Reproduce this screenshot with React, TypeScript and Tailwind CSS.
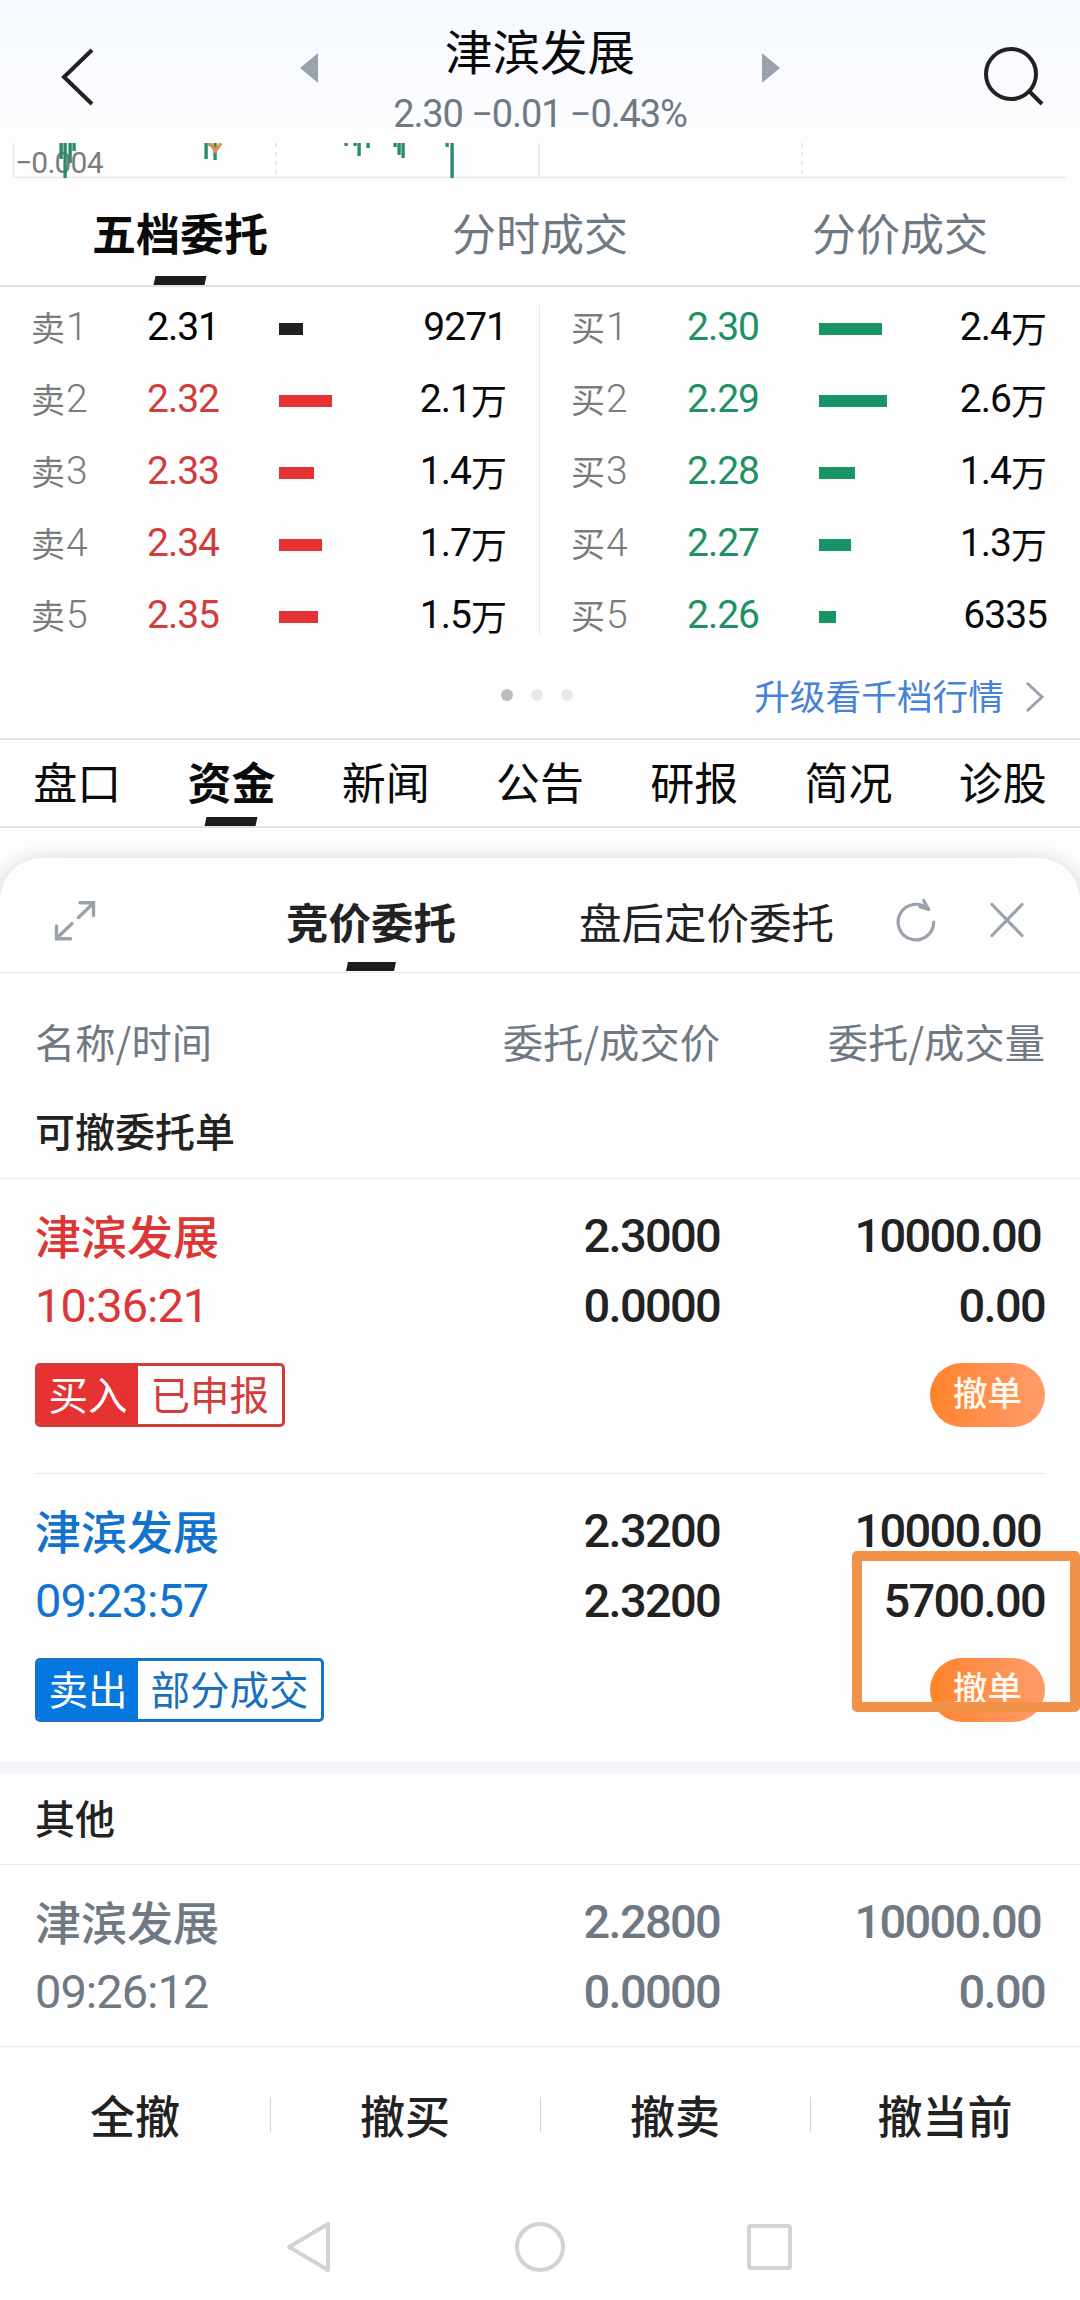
import { useState } from 'react';
import clsx from 'clsx';

type Level = {
  label: string;
  index: number;
  price: string;
  amount: string;
  unit?: string;
  bar: number;
  tone: 'flat' | 'up' | 'down';
};

type Order = {
  id: number;
  name: string;
  time: string;
  price: string;
  dealPrice: string;
  amount: string;
  dealAmount: string;
  side?: 'buy' | 'sell';
  status?: string;
};

const asks: Level[] = [
  { label: '卖', index: 1, price: '2.31', amount: '9271', bar: 24, tone: 'flat' },
  { label: '卖', index: 2, price: '2.32', amount: '2.1', unit: '万', bar: 53, tone: 'up' },
  { label: '卖', index: 3, price: '2.33', amount: '1.4', unit: '万', bar: 35, tone: 'up' },
  { label: '卖', index: 4, price: '2.34', amount: '1.7', unit: '万', bar: 43, tone: 'up' },
  { label: '卖', index: 5, price: '2.35', amount: '1.5', unit: '万', bar: 39, tone: 'up' },
];

const bids: Level[] = [
  { label: '买', index: 1, price: '2.30', amount: '2.4', unit: '万', bar: 63, tone: 'down' },
  { label: '买', index: 2, price: '2.29', amount: '2.6', unit: '万', bar: 68, tone: 'down' },
  { label: '买', index: 3, price: '2.28', amount: '1.4', unit: '万', bar: 36, tone: 'down' },
  { label: '买', index: 4, price: '2.27', amount: '1.3', unit: '万', bar: 32, tone: 'down' },
  { label: '买', index: 5, price: '2.26', amount: '6335', bar: 17, tone: 'down' },
];

const openOrders: Order[] = [
  {
    id: 1,
    name: '津滨发展',
    time: '10:36:21',
    price: '2.3000',
    dealPrice: '0.0000',
    amount: '10000.00',
    dealAmount: '0.00',
    side: 'buy',
    status: '已申报',
  },
  {
    id: 2,
    name: '津滨发展',
    time: '09:23:57',
    price: '2.3200',
    dealPrice: '2.3200',
    amount: '10000.00',
    dealAmount: '5700.00',
    side: 'sell',
    status: '部分成交',
  },
];

const closedOrder: Order = {
  id: 3,
  name: '津滨发展',
  time: '09:26:12',
  price: '2.2800',
  dealPrice: '0.0000',
  amount: '10000.00',
  dealAmount: '0.00',
};

// [x, height] of the volume bars left visible under the header
const volumeBars = [
  [61, 16], [65, 35], [70, 20], [74, 8],
  [206, 16], [210, 3], [215, 17],
  [346, 3], [355, 3], [359, 13], [368, 5],
  [395, 4], [399, 12], [403, 15],
  [447, 4], [452, 35],
];

const textTone = { flat: 'text-black', up: 'text-[#d23c3c]', down: 'text-[#219065]' };
const barTone = { flat: 'bg-[#222]', up: 'bg-[#e63232]', down: 'bg-[#199466]' };

function Indicator({ className }: { className?: string }) {
  return <span className={clsx('absolute left-1/2 h-[9px] -translate-x-1/2 -skew-x-12 bg-[#1c1c1c]', className)} />;
}

function Header() {
  return (
    <header className="flex h-[143px] items-start justify-between bg-gradient-to-b from-[#f5f9ff] to-[#fdfdfe]">
      <svg className="mt-[45px] ml-[56px] h-[64px] w-[44px]" viewBox="0 0 44 64" fill="none" stroke="#222" strokeWidth="4">
        <path d="M36 5 L8 32 L36 59" />
      </svg>
      <div className="flex w-[480px] items-start justify-between">
        <svg className="mt-[53px] h-[30px] w-[18px]" viewBox="0 0 18 30" fill="#9aa3ad">
          <path d="M0 15 L18 0 V30 Z" />
        </svg>
        <div className="flex flex-col items-center">
          <h1 className="mt-[20px] h-[60px] text-[47.5px] leading-[60px]">津滨发展</h1>
          <p className="mt-[13px] font-[Roboto] text-[38px] leading-[42px] tracking-[-1.1px] whitespace-nowrap text-[#6f7984]">
            2.30 −0.01 −0.43%
          </p>
        </div>
        <svg className="mt-[53px] h-[30px] w-[18px]" viewBox="0 0 18 30" fill="#9aa3ad">
          <path d="M18 15 L0 0 V30 Z" />
        </svg>
      </div>
      <svg className="mt-[44px] mr-[34px] h-[66px] w-[66px]" viewBox="0 0 66 66" fill="none" stroke="#222" strokeWidth="4">
        <circle cx="31" cy="30" r="25" />
        <path d="M48 46 L62 60" />
      </svg>
    </header>
  );
}

function VolumeChart() {
  return (
    <div className="relative h-[36px]">
      <svg className="block h-[36px] w-full" viewBox="0 0 1080 36" fill="none">
        <path d="M13.5 0 V34.5 H1067 M539 0 V34" stroke="#e8e8e8" strokeWidth="1.5" />
        <path d="M276 0 V34 M802 0 V34" stroke="#e8e8e8" strokeWidth="2" strokeDasharray="4 5" />
        <text x="15" y="30" fill="#7d7d7d" fontFamily="Roboto" fontSize="30" letterSpacing="-0.8">
          −0.004
        </text>
        {volumeBars.map(([x, h]) => (
          <rect key={x} x={x - 1.6} y="0" width="3.4" height={h} fill="#2b8d68" />
        ))}
        <path d="M210 0 L215.500 8 L221 0" stroke="#dc9152" strokeWidth="3.5" />
      </svg>
    </div>
  );
}

function DepthColumn({ levels }: { levels: Level[] }) {
  return (
    <div className="w-[540px] pr-[33px] pl-[31px]">
      {levels.map((level) => (
        <div key={level.label + level.index} className="flex h-[72px] items-center">
          <div className="flex w-[116px] items-center text-[34px] text-[#7b7b7b]">
            {level.label}
            <span className="ml-px font-[Roboto] text-[39px] font-light">{level.index}</span>
          </div>
          <span className={clsx('w-[132px] font-[Roboto] text-[39px] tracking-[-1px]', textTone[level.tone])}>
            {level.price}
          </span>
          <span className={clsx('mt-[4px] h-[12px]', barTone[level.tone])} style={{ width: level.bar }} />
          <div className="ml-auto flex items-center">
            <span className="font-[Roboto] text-[39px] tracking-[-1px]">{level.amount}</span>
            {level.unit && <span className="text-[36px]">{level.unit}</span>}
          </div>
        </div>
      ))}
    </div>
  );
}

function OrderCells({ order, muted }: { order: Order; muted?: boolean }) {
  const tone = order.side === 'buy' ? 'text-[#dc3636]' : order.side === 'sell' ? 'text-[#1173ce]' : 'text-[#6f7984]';
  return (
    <div className="flex px-[35px] pt-[20px]">
      <div className={clsx('w-[324px]', tone)}>
        <div className="h-[70px] text-[46px] leading-[70px] font-medium">{order.name}</div>
        <div className="h-[70px] font-[Roboto] text-[47px] leading-[74px] tracking-[-1px]">{order.time}</div>
      </div>
      <div className={clsx('w-[361px] text-right font-[Roboto] text-[47px] leading-[70px] font-medium tracking-[-1.7px]', muted ? 'text-[#6f7984]' : 'text-[#222]')}>
        <div className="pt-[2px]">{order.price}</div>
        <div>{order.dealPrice}</div>
      </div>
      <div className={clsx('w-[325px] text-right font-[Roboto] text-[47px] leading-[70px] font-medium tracking-[-1.7px]', muted ? 'text-[#6f7984]' : 'text-[#222]')}>
        <div className="pt-[2px] pr-[4px]">{order.amount}</div>
        <div>{order.dealAmount}</div>
      </div>
    </div>
  );
}

function OpenOrder({ order }: { order: Order }) {
  const buy = order.side === 'buy';
  return (
    <div className="h-[294px]">
      <OrderCells order={order} />
      <div className="mt-[22px] flex items-center justify-between px-[35px]">
        <div
          className={clsx(
            'flex h-[64px] overflow-hidden rounded-[5px] border-[3px] text-[39.5px] leading-[54px]',
            buy ? 'border-[#d33b3b] text-[#d23c3c]' : 'border-[#1173ce] text-[#1b70bd]'
          )}
        >
          <span className={clsx('w-[100px] text-center text-white', buy ? 'bg-[#e63232]' : 'bg-[#0777e0]')}>
            {buy ? '买入' : '卖出'}
          </span>
          <span className="px-[12.5px]">{order.status}</span>
        </div>
        <button className="h-[64px] w-[115px] rounded-full bg-gradient-to-r from-[#ff8429] to-[#ff9b6a] pb-[7px] text-[34.5px] leading-[57px] font-medium text-[#fffaf0]">
          撤单
        </button>
      </div>
    </div>
  );
}

function SheetHeader() {
  return (
    <div className="flex h-[115px] items-center border-b border-[#ebebeb] pt-[12px] text-[42.5px] text-[#222]">
      <svg className="ml-[50px] h-[50px] w-[50px]" viewBox="50 897 50 50" fill="none" stroke="#9aa3ad" strokeWidth="3.4" strokeLinecap="round">
        <path d="M80 903.700 H93.500 V916.500 M93 904.500 L78.500 918.500" />
        <path d="M56.500 927 V939.700 H70.500 M57 939 L72 924.500" />
      </svg>
      <div className="relative ml-[186px] flex h-full items-center font-bold">
        竞价委托
        <Indicator className="bottom-[1px] w-[48px]" />
      </div>
      <div className="ml-[123px] flex h-full items-center">盘后定价委托</div>
      <svg className="ml-[56px] h-[50px] w-[50px]" viewBox="893 897 50 50" fill="none" stroke="#9aa3ad" strokeWidth="3.200" strokeLinecap="round" strokeLinejoin="round">
        <path d="M936.700 923 A17.800 17.800 0 1 1 931.200 910.200" />
        <path d="M926.700 901.500 L931.700 910.500 L923 907.800" />
      </svg>
      <svg className="ml-[42px] h-[50px] w-[50px]" viewBox="986 897 50 50" fill="none" stroke="#9aa3ad" strokeWidth="3.200" strokeLinecap="round">
        <path d="M996 905.500 L1026 936.500 M1026 905.500 L996 936.500" />
      </svg>
    </div>
  );
}

function SystemNav() {
  return (
    <nav className="flex flex-1 items-start pt-[35px]">
      <svg className="ml-[283px] h-[60px] w-[50px]" viewBox="0 0 50 60" fill="none" stroke="#d3d3d3" strokeWidth="4" strokeLinejoin="round">
        <path d="M6 30 L45 7 V53 Z" />
      </svg>
      <svg className="ml-[177px] h-[60px] w-[60px]" viewBox="0 0 60 60" fill="none" stroke="#d3d3d3" strokeWidth="4">
        <circle cx="30" cy="30" r="23" />
      </svg>
      <svg className="ml-[170px] h-[60px] w-[60px]" viewBox="0 0 60 60" fill="none" stroke="#d3d3d3" strokeWidth="4">
        <rect x="9" y="9" width="41" height="42" rx="2" />
      </svg>
    </nav>
  );
}

export default function App() {
  const [depthTab, setDepthTab] = useState('五档委托');
  const [infoTab, setInfoTab] = useState('资金');

  return (
    <div className="flex h-[2300px] w-[1080px] flex-col overflow-hidden bg-[#fefefe] font-['Noto_Sans_CJK_SC',sans-serif] leading-none text-[#0a0a0a]">
      <Header />
      <VolumeChart />

      {/* Depth tabs */}
      <div className="grid h-[108px] grid-cols-3 border-b-2 border-[#e3e3e3] text-[44px]">
        {['五档委托', '分时成交', '分价成交'].map((tab) => (
          <button
            key={tab}
            onClick={() => setDepthTab(tab)}
            className={clsx('relative h-[106px]', tab === depthTab ? 'font-bold' : 'text-[#6f7984]')}
          >
            {tab}
            {tab === depthTab && <Indicator className="bottom-0 w-[51px]" />}
          </button>
        ))}
      </div>

      {/* Five level quotes */}
      <div className="relative flex pt-[4px]">
        <DepthColumn levels={asks} />
        <DepthColumn levels={bids} />
        <span className="absolute top-[18px] left-[539px] h-[330px] w-px bg-[#e8e8e8]" />
      </div>

      <div className="flex h-[87px] items-center pl-[501px]">
        <div className="flex gap-[18px]">
          <span className="h-[12px] w-[12px] rounded-full bg-[#bdbdbd]" />
          <span className="h-[12px] w-[12px] rounded-full bg-[#e8e8e8]" />
          <span className="h-[12px] w-[12px] rounded-full bg-[#e8e8e8]" />
        </div>
        <a className="ml-auto flex items-center pr-[34px] text-[35.7px] text-[#4683d6]">
          升级看千档行情
          <svg className="mt-[4px] ml-[20px] h-[32px] w-[22px]" viewBox="0 0 22 32" fill="none" stroke="#9aa3ad" strokeWidth="3">
            <path d="M3 2 L18 16 L3 30" />
          </svg>
        </a>
      </div>

      {/* Info tabs */}
      <div className="grid h-[90px] grid-cols-7 border-y-2 border-[#e0e0e0] text-[44px]">
        {['盘口', '资金', '新闻', '公告', '研报', '简况', '诊股'].map((tab) => (
          <button
            key={tab}
            onClick={() => setInfoTab(tab)}
            className={clsx('relative pb-[5px]', tab === infoTab && 'font-bold')}
          >
            {tab}
            {tab === infoTab && <Indicator className="bottom-0 w-[51px]" />}
          </button>
        ))}
      </div>

      {/* Order sheet */}
      <section className="mt-[30px] flex flex-1 flex-col rounded-t-[42px] bg-[#fefefe] shadow-[0_4px_24px_rgba(0,0,0,0.22)]">
        <SheetHeader />
        <div className="flex h-[136px] items-center px-[35px] text-[40.3px] text-[#6f7984]">
          <span className="w-[324px]">名称/时间</span>
          <span className="w-[361px] text-right">委托/成交价</span>
          <span className="w-[325px] text-right">委托/成交量</span>
        </div>
        <h2 className="h-[70px] border-b border-[#ebebeb] px-[35px] text-[40px] leading-[42px] font-medium text-[#222]">
          可撤委托单
        </h2>

        <OpenOrder order={openOrders[0]} />
        <div className="mx-[35px] h-px bg-[#ebebeb]" />
        <div className="relative h-[288px]">
          <OpenOrder order={openOrders[1]} />
          <span className="absolute top-[77px] right-0 h-[161px] w-[228px] rounded-[5px] border-[10px] border-[#f09248]" />
        </div>

        <div className="h-[11px] bg-[#f4f5fa]" />
        <h2 className="h-[92px] border-b border-[#ebebeb] px-[35px] text-[40px] leading-[88px] font-medium text-[#222]">其他</h2>
        <div className="h-[181px]">
          <OrderCells order={closedOrder} muted />
        </div>

        <div className="flex h-[136px] items-center border-t border-[#ebebeb] text-[45px] font-medium text-[#222]">
          {['全撤', '撤买', '撤卖', '撤当前'].map((action, i) => (
            <div key={action} className="flex flex-1 items-center">
              {i > 0 && <span className="-mr-px h-[35px] w-px bg-[#d5d5d5]" />}
              <button className="flex-1">{action}</button>
            </div>
          ))}
        </div>
        <SystemNav />
      </section>
    </div>
  );
}
